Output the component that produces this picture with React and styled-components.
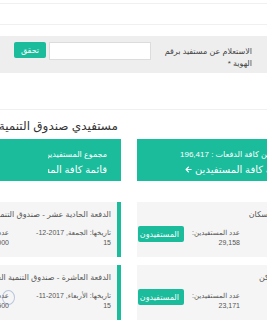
import styled, { createGlobalStyle } from "styled-components";
import { FaArrowLeft } from "react-icons/fa";

const teal = "#1bbc9c";

const GlobalStyle = createGlobalStyle`
  html, body {
    margin: 0;
    padding: 0;
    background: #fff;
  }
  body {
    font-family: "Liberation Sans", "DejaVu Sans", sans-serif;
  }
`;

const Viewport = styled.div`
  position: relative;
  width: 267px;
  height: 322px;
  overflow: hidden;
  background: #fff;
`;

const TopBar = styled.div`
  padding-top: 3px;
  height: 36px;
  box-sizing: border-box;

  .rule {
    height: 22px;
    box-sizing: border-box;
    border-top: 1px solid #f0f0f0;
    border-bottom: 1px solid #f0f0f0;
  }
`;

const SearchBand = styled.div`
  direction: rtl;
  display: flex;
  align-items: flex-start;
  gap: 4px;
  height: 37px;
  box-sizing: border-box;
  padding: 6px 15px 0 0;
  background: #eeeeee;
`;

const SearchLabel = styled.label`
  width: 97px;
  margin-top: 4px;
  font-size: 8px;
  line-height: 12px;
  color: #444;
`;

const SearchInput = styled.input`
  width: 102px;
  height: 18px;
  box-sizing: border-box;
  border: 1px solid #dcdcdc;
  background: #fff;
  margin: 0;
`;

const SearchButton = styled.button`
  width: 32px;
  height: 16px;
  margin: 0 -1px 0 0;
  padding: 0;
  border: none;
  border-radius: 2px;
  background: ${teal};
  color: #fff;
  font-family: inherit;
  font-size: 8px;
`;

const Divider = styled.div`
  height: 37px;
  box-sizing: border-box;
  border-bottom: 1px solid #f0f0f0;
`;

const Columns = styled.div`
  direction: rtl;
  display: flex;
  gap: 16px;
  width: 446px;
  margin-left: -94px;
`;

const Column = styled.div`
  width: 215px;
  min-width: 0;
  display: flex;
  flex-direction: column;
`;

const ColumnTitle = styled.h3`
  margin: 8px 0 5px;
  padding-right: 3px;
  height: 16px;
  font-size: 12px;
  line-height: 16px;
  font-weight: normal;
  color: #333;
  white-space: nowrap;
`;

const SummaryBox = styled.div`
  height: 42px;
  box-sizing: border-box;
  padding: 8px 14px 0 ${(p) => p.$padLeft}px;
  background: ${teal};
  color: #fff;
  font-size: 8px;
  line-height: 15px;
  text-align: ${(p) => (p.$toLeft ? "left" : "right")};
`;

const BoxLine = styled.div`
  white-space: nowrap;
  overflow: hidden;
  padding-left: ${(p) => p.$indent || 0}px;
  font-size: ${(p) => (p.$link ? "10px" : "inherit")};

  svg {
    font-size: 7px;
    margin-right: 3px;
    vertical-align: 0;
  }
`;

const CardList = styled.div`
  margin-top: 21px;
  display: flex;
  flex-direction: column;
  gap: 8px;
`;

const Card = styled.div`
  position: relative;
  height: 55px;
  box-sizing: border-box;
  padding: 7px 6px 9px 1px;
  background: #f5f5f5;
  border-right: 4px solid ${teal};
`;

const CardTitle = styled.div`
  height: 12px;
  font-size: 8px;
  line-height: 12px;
  color: #555;
  white-space: nowrap;
`;

const CardRow = styled.div`
  display: flex;
  align-items: flex-start;
  margin-top: 7px;
  font-size: 7px;
  line-height: 9.5px;
  color: #555;
`;

const DateBlock = styled.div`
  width: 68px;
  flex-shrink: 0;
  white-space: nowrap;
`;

const CountBlock = styled.div`
  width: 40px;
  flex-shrink: 0;
  margin-right: 34px;
  white-space: nowrap;
`;

const ListButton = styled.button`
  margin: -2px auto 0 0;
  width: 46px;
  height: 16px;
  padding: 0 5px 0 0;
  border: none;
  border-radius: 2px;
  background: ${teal};
  color: #fff;
  font-family: inherit;
  font-size: 8px;
  direction: rtl;
  text-align: right;
  white-space: nowrap;
  overflow: hidden;
`;

const Ring = styled.span`
  position: absolute;
  left: 96px;
  top: 25px;
  width: 11px;
  height: 13px;
  border-radius: 50%;
  border: 1px solid rgba(110, 140, 190, 0.45);
`;

const developmentFund = [
  {
    title: "الدفعة الحادية عشر - صندوق التنمية العقارية",
    date: "تاريخها: الجمعة, 2017-12-",
    day: "15",
    count: "16,000",
  },
  {
    title: "الدفعة العاشرة - صندوق التنمية العقارية",
    date: "تاريخها: الأربعاء, 2017-11-",
    day: "15",
    count: "15,500",
    ring: true,
  },
];

const housing = [
  { title: "الدفعة الثانية عشر - الإسكان", date: "تاريخها: الأحد, 2017-12-", day: "10", count: "29,158" },
  { title: "الدفعة الأولى - دعم سكن", date: "تاريخها: الأحد, 2017-11-", day: "12", count: "23,171" },
];

const BeneficiaryCard = ({ item }) => (
  <Card>
    <CardTitle>{item.title}</CardTitle>
    <CardRow>
      <DateBlock>
        {item.date}
        <br />
        {item.day}
      </DateBlock>
      <CountBlock>
        عدد المستفيدين:
        <br />
        {item.count}
      </CountBlock>
      <ListButton>المستفيدون</ListButton>
    </CardRow>
    {item.ring && <Ring />}
  </Card>
);

export default function App() {
  return (
    <Viewport>
      <GlobalStyle />
      <TopBar>
        <div className="rule" />
      </TopBar>

      <SearchBand>
        <SearchLabel>الاستعلام عن مستفيد برقم الهوية *</SearchLabel>
        <SearchInput type="text" />
        <SearchButton>تحقق</SearchButton>
      </SearchBand>

      <Divider />

      <Columns>
        <Column>
          <ColumnTitle>&nbsp;</ColumnTitle>
          <SummaryBox $toLeft $padLeft={43}>
            <BoxLine>مجموع المستفيدين من كافة الدفعات : 196,417</BoxLine>
            <BoxLine $link $indent={5}>
              قائمة كافة المستفيدين
              <FaArrowLeft />
            </BoxLine>
          </SummaryBox>
          <CardList>
            {housing.map((item) => (
              <BeneficiaryCard key={item.title} item={item} />
            ))}
          </CardList>
        </Column>

        <Column>
          <ColumnTitle>مستفيدي صندوق التنمية العقارية</ColumnTitle>
          <SummaryBox $padLeft={142}>
            <BoxLine>مجموع المستفيدين من كافة الدفعات : 31,500</BoxLine>
            <BoxLine $link>
              قائمة كافة المستفيدين
              <FaArrowLeft />
            </BoxLine>
          </SummaryBox>
          <CardList>
            {developmentFund.map((item) => (
              <BeneficiaryCard key={item.title} item={item} />
            ))}
          </CardList>
        </Column>
      </Columns>
    </Viewport>
  );
}
